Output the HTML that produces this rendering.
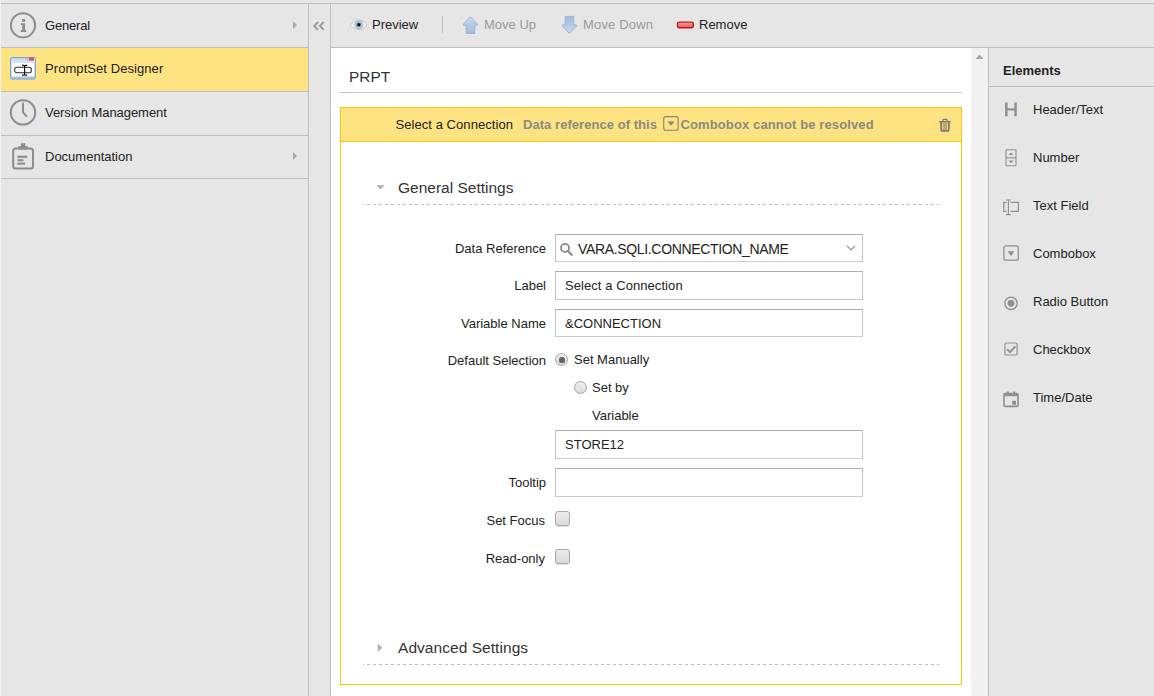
<!DOCTYPE html>
<html>
<head>
<meta charset="utf-8">
<style>
*{box-sizing:border-box;margin:0;padding:0}
html,body{width:1154px;height:696px;overflow:hidden;background:#e6e6e6}
body{font-family:"Liberation Sans",sans-serif;font-size:13px;color:#222;position:relative}
.abs{position:absolute}
.t{position:absolute;white-space:nowrap;line-height:16px;height:16px;margin-top:1px}
.r{text-align:right}
.line{position:absolute;background:#bfbfbf}
/* sidebar */
#side{position:absolute;left:1px;top:3px;width:307px;height:693px;border-top:1px solid #bfbfbf}
.nav{position:absolute;left:0;width:307px;height:44px;border-bottom:1px solid #bfbfbf}
.nav.sel{background:#fde382}
.nav .lbl{position:absolute;left:44px;top:14px;line-height:16px;white-space:nowrap}
/* inputs */
.inp{position:absolute;left:555px;width:308px;height:28px;background:#fff;border:1px solid #c2c2c2;border-top-color:#adadad;border-bottom-color:#cacaca}
.inp span{position:absolute;left:9px;top:6px;line-height:16px;white-space:nowrap}
.dash{position:absolute;left:363px;width:576px;height:1px;background:repeating-linear-gradient(90deg,#bdbdbd 0,#bdbdbd 3px,transparent 3px,transparent 6px);background-position:-2px 0}
.cb{position:absolute;left:555px;width:15px;height:15px;border:1px solid #a9a9a9;border-radius:3px;background:linear-gradient(#ececec,#dadada);box-shadow:0 1px 0 rgba(0,0,0,.12)}
.rad{position:absolute;width:13px;height:13px;border:1px solid #a6a6a6;border-radius:50%;background:linear-gradient(#f0f0f0,#d9d9d9)}
.el{position:absolute;left:1033px;white-space:nowrap;line-height:16px;margin-top:1px}
</style>
</head>
<body>
<!-- left white sliver -->
<div class="abs" style="left:0;top:0;width:1px;height:696px;background:#f4f4f4"></div>

<!-- sidebar -->
<div id="side">
  <div class="nav" style="top:0"><span class="lbl" style="letter-spacing:-0.2px">General</span></div>
  <div class="nav sel" style="top:44px"><span class="lbl" style="top:13px;letter-spacing:0.07px">PromptSet Designer</span></div>
  <div class="nav" style="top:88px"><span class="lbl" style="top:13px;letter-spacing:-0.06px">Version Management</span></div>
  <div class="nav" style="top:132px;height:43px"><span class="lbl" style="top:13px">Documentation</span></div>
</div>
<div class="line" style="left:308px;top:3px;width:1px;height:693px"></div>
<div class="line" style="left:330px;top:3px;width:1px;height:693px"></div>
<div class="line" style="left:308px;top:3px;width:846px;height:1px"></div>

<!-- toolbar -->
<div class="line" style="left:331px;top:47px;width:823px;height:1px"></div>
<div class="t" style="left:372px;top:16px">Preview</div>
<div class="line" style="left:442px;top:16px;width:1px;height:17px;background:#bdbdbd"></div>
<div class="t" style="left:484px;top:16px;color:#9a9a9a">Move Up</div>
<div class="t" style="left:583px;top:16px;color:#9a9a9a;letter-spacing:0.18px">Move Down</div>
<div class="t" style="left:699px;top:16px">Remove</div>

<!-- main white -->
<div class="abs" style="left:331px;top:48px;width:640px;height:648px;background:#fff"></div>
<div class="abs" style="left:971px;top:48px;width:17px;height:648px;background:#f1f1f1"></div>
<div class="line" style="left:988px;top:48px;width:1px;height:648px"></div>

<div class="t" style="left:349px;top:67px;font-size:15.4px;line-height:18px;height:18px;color:#333">PRPT</div>
<div class="line" style="left:340px;top:92px;width:622px;height:1px;background:#c6c6c6"></div>

<!-- yellow box -->
<div class="abs" style="left:340px;top:107px;width:622px;height:578px;border:1px solid #f8c906"></div>
<div class="abs" style="left:341px;top:108px;width:620px;height:34px;background:#fde382;border-bottom:1px solid #f8c906"></div>
<div class="t" style="left:395.5px;top:116px;letter-spacing:0.06px">Select a Connection</div>
<div class="t" style="left:523px;top:116px;font-weight:bold;color:#8b8b80;letter-spacing:0.05px">Data reference of this</div>
<div class="t" style="left:680.5px;top:116px;font-weight:bold;color:#8b8b80;letter-spacing:0.12px">Combobox cannot be resolved</div>

<!-- General settings -->
<div class="t" style="left:398px;top:178px;font-size:15.5px;line-height:18px;height:18px;color:#333">General Settings</div>
<div class="dash" style="top:204px"></div>

<div class="t r" style="left:396px;width:150px;top:240px">Data Reference</div>
<div class="inp" style="top:234px"><span style="left:22px;font-size:14px;letter-spacing:-0.34px">VARA.SQLI.CONNECTION_NAME</span></div>
<div class="t r" style="left:396px;width:150px;top:277px">Label</div>
<div class="inp" style="top:271px;height:29px"><span style="letter-spacing:0.07px">Select a Connection</span></div>
<div class="t r" style="left:396px;width:150px;top:315px">Variable Name</div>
<div class="inp" style="top:309px"><span>&amp;CONNECTION</span></div>
<div class="t r" style="left:396px;width:150px;top:352px">Default Selection</div>
<div class="rad" style="left:555px;top:353px"></div>
<div class="t" style="left:574px;top:351px">Set Manually</div>
<div class="rad" style="left:574px;top:381px"></div>
<div class="t" style="left:592px;top:379px">Set by</div>
<div class="t" style="left:592px;top:407px">Variable</div>
<div class="inp" style="top:430px;height:29px"><span>STORE12</span></div>
<div class="t r" style="left:396px;width:150px;top:474px">Tooltip</div>
<div class="inp" style="top:468px;height:29px"></div>
<div class="t r" style="left:396px;width:149px;top:512px">Set Focus</div>
<div class="cb" style="top:511px"></div>
<div class="t r" style="left:396px;width:149px;top:550px">Read-only</div>
<div class="cb" style="top:549px"></div>

<div class="t" style="left:398px;top:638px;font-size:15.5px;letter-spacing:0.05px;line-height:18px;height:18px;color:#333">Advanced Settings</div>
<div class="dash" style="top:664px"></div>

<!-- right panel -->
<div class="t" style="left:1003px;top:62px;font-weight:bold">Elements</div>
<div class="line" style="left:989px;top:86px;width:165px;height:1px"></div>
<div class="el" style="top:101px">Header/Text</div>
<div class="el" style="top:149px">Number</div>
<div class="el" style="top:197px">Text Field</div>
<div class="el" style="top:245px">Combobox</div>
<div class="el" style="top:293px">Radio Button</div>
<div class="el" style="top:341px">Checkbox</div>
<div class="el" style="top:389px">Time/Date</div>

<!-- sidebar icons -->
<svg class="abs" style="left:9px;top:11px" width="29" height="29" viewBox="9 11 29 29">
  <circle cx="23" cy="25.3" r="12.1" fill="none" stroke="#8c8c8c" stroke-width="2"/>
  <rect x="22.1" y="19" width="3" height="2.8" fill="#8c8c8c"/>
  <path d="M20.8 23.2h4.3v6.8h1v1.9h-5.3v-1.9h1.4v-4.9h-1.4z" fill="#8c8c8c"/>
</svg>
<svg class="abs" style="left:9px;top:98px" width="29" height="29" viewBox="9 98 29 29">
  <circle cx="23" cy="112.4" r="12.2" fill="none" stroke="#8c8c8c" stroke-width="2"/>
  <path d="M23 103.6V112.4L26.4 116" fill="none" stroke="#8c8c8c" stroke-width="2" stroke-linecap="round" stroke-linejoin="round"/>
</svg>
<svg class="abs" style="left:9px;top:141px" width="29" height="31" viewBox="9 141 29 31">
  <rect x="13.2" y="148.5" width="19.8" height="20" rx="2.6" fill="none" stroke="#8c8c8c" stroke-width="2"/>
  <path d="M18.3 149.6v-3.4h2.6v-3h4.4v3h2.6v3.4z" fill="#8c8c8c"/>
  <rect x="17.4" y="155.7" width="9.8" height="2.1" fill="#8c8c8c"/>
  <rect x="17.4" y="159.2" width="6" height="2.1" fill="#8c8c8c"/>
  <rect x="17.4" y="162.6" width="7.6" height="2.1" fill="#8c8c8c"/>
</svg>
<!-- promptset icon -->
<svg class="abs" style="left:10px;top:57px" width="26" height="23" viewBox="0 0 26 23">
  <defs><linearGradient id="wg" x1="0" y1="0" x2="0" y2="1"><stop offset="0" stop-color="#bcd3ee"/><stop offset="1" stop-color="#dfeaf7"/></linearGradient></defs>
  <rect x="0.5" y="0.5" width="25" height="21.6" rx="1.6" fill="#a9c6e8" stroke="#7fa6d4"/>
  <rect x="1" y="1" width="24" height="4.6" fill="url(#wg)"/>
  <rect x="1.6" y="5.8" width="22.8" height="13.6" fill="#fff"/>
  <rect x="19" y="0.6" width="5" height="3" fill="#e8494a"/>
  <rect x="15.6" y="0.8" width="2.6" height="2.6" fill="#9fb9db"/>
  <rect x="4.6" y="10.3" width="16.8" height="5.4" rx="2.2" fill="#fff" stroke="#555" stroke-width="1.3"/>
  <path d="M14.6 8.2v10M12 8.2c1.6 0 2.6 0.3 2.6 1 0-0.7 1-1 2.6-1M12 18.2c1.6 0 2.6-0.3 2.6-1 0 0.7 1 1 2.6 1" fill="none" stroke="#111" stroke-width="1.2"/>
</svg>
<!-- sidebar arrows -->
<svg class="abs" style="left:292px;top:20px" width="6" height="10" viewBox="0 0 6 10"><path d="M1 1l4 4-4 4z" fill="#a8a8a8"/></svg>
<svg class="abs" style="left:292px;top:151px" width="6" height="10" viewBox="0 0 6 10"><path d="M1 1l4 4-4 4z" fill="#a8a8a8"/></svg>
<!-- collapse -->
<svg class="abs" style="left:312px;top:20px" width="14" height="12" viewBox="312 20 14 12"><path d="M318 21.900L314.300 25.900 318 29.900M323.700 21.900L320 25.900l3.700 4" fill="none" stroke="#9c9c9c" stroke-width="2.100"/></svg>
<!-- eye -->
<svg class="abs" style="left:349px;top:19px" width="19" height="12" viewBox="349 19 19 12">
  <path d="M350.2 24.8C353 21.2 356 20 358.8 20s5.8 1.2 8.2 4.8C364.600 28.400 361.600 29.600 358.800 29.600S353 28.400 350.200 24.800z" fill="#f3f3f3" stroke="#b9b9b9" stroke-width="0.8"/>
  <circle cx="358.8" cy="24.8" r="4.5" fill="#a9bfda"/>
  <circle cx="358.8" cy="24.8" r="2" fill="#5a4a44"/>
  <circle cx="358.8" cy="24.8" r="1.300" fill="#0a0a0a"/>
</svg>
<!-- move up / down -->
<svg class="abs" style="left:461px;top:15px" width="19" height="20" viewBox="461 15 19 20">
  <defs><linearGradient id="ag" x1="0" y1="0" x2="0" y2="1"><stop offset="0" stop-color="#cddcef"/><stop offset="0.5" stop-color="#b4c9e3"/><stop offset="1" stop-color="#a2bbdb"/></linearGradient></defs>
  <path d="M470.400 16.800L477.400 24.100q0.500 1.200-0.900 1.300H474.800V33.500H466.200V25.400H464.300q-1.400-0.100-0.900-1.300z" fill="url(#ag)" stroke="#94b0d6" stroke-width="0.900" stroke-linejoin="round"/>
</svg>
<svg class="abs" style="left:560px;top:15px" width="19" height="20" viewBox="560 15 19 20">
  <defs><linearGradient id="ag2" x1="0" y1="0" x2="0" y2="1"><stop offset="0" stop-color="#a2bbdb"/><stop offset="0.5" stop-color="#b4c9e3"/><stop offset="1" stop-color="#d0dff0"/></linearGradient></defs>
  <path d="M569.400 33.400L562.400 26.000q-0.500-1.200 0.900-1.300H565.200V16.400H573.800V24.700H575.700q1.400 0.100 0.900 1.300z" fill="url(#ag2)" stroke="#94b0d6" stroke-width="0.900" stroke-linejoin="round"/>
</svg>
<!-- remove -->
<svg class="abs" style="left:676px;top:20px" width="19" height="10" viewBox="676 20 19 10">
  <defs><linearGradient id="rg" x1="0" y1="0" x2="0" y2="1"><stop offset="0" stop-color="#fbc4c4"/><stop offset="0.350" stop-color="#ef8585"/><stop offset="1" stop-color="#e65f5f"/></linearGradient></defs>
  <rect x="677.500" y="22.100" width="15.800" height="5.600" rx="1.600" fill="url(#rg)" stroke="#c21616" stroke-width="1.400"/>
</svg>
<!-- scroll arrow -->
<svg class="abs" style="left:975px;top:54px" width="9" height="6" viewBox="0 0 9 6"><path d="M0.500 5L4.500 0.800 8.500 5z" fill="#a3a3a3"/></svg>
<!-- trash -->
<svg class="abs" style="left:938px;top:118px" width="14" height="15" viewBox="938 118 14 15">
  <rect x="939.200" y="121" width="11.600" height="1.500" fill="#787878"/>
  <path d="M942.800 121.200v-1q0-0.900 0.900-0.900h2.600q0.900 0 0.900 0.900v1" fill="none" stroke="#787878" stroke-width="1.200"/>
  <path d="M940.900 122.400l0.500 8.600h7.200l0.500-8.600" fill="#b7a96c" stroke="#787878" stroke-width="1.700" stroke-linejoin="round"/>
  <rect x="942.200" y="123.400" width="0.900" height="6.400" fill="#f3dc80"/>
  <rect x="947" y="123.400" width="0.900" height="6.400" fill="#f3dc80"/>
</svg>
<!-- header combobox icon -->
<svg class="abs" style="left:663px;top:116px" width="16" height="15" viewBox="0 0 16 15">
  <rect x="0.700" y="0.600" width="14.400" height="13.600" rx="2" fill="none" stroke="#85857f" stroke-width="1.100"/>
  <path d="M4.600 5.600h6.800l-3.400 4.200z" fill="#85857f"/>
</svg>
<!-- section triangles -->
<svg class="abs" style="left:376px;top:185px" width="9" height="5" viewBox="0 0 9 5"><path d="M0.400 0.200h8.200l-4.100 4.400z" fill="#b0b0b0"/></svg>
<svg class="abs" style="left:377px;top:643px" width="6" height="10" viewBox="0 0 6 10"><path d="M0.800 0.500l4.400 4.200-4.400 4.200z" fill="#b0b0b0"/></svg>
<!-- search icon -->
<svg class="abs" style="left:559px;top:242px" width="15" height="15" viewBox="559 242 15 15">
  <circle cx="565" cy="247.900" r="4" fill="none" stroke="#8e8e8e" stroke-width="1.900"/>
  <path d="M568 251l3.600 3.700" stroke="#8e8e8e" stroke-width="2.300" stroke-linecap="round"/>
</svg>
<!-- chevron -->
<svg class="abs" style="left:846px;top:245px" width="10" height="6" viewBox="0 0 10 6"><path d="M1 0.800l4 4 4-4" fill="none" stroke="#8e8e8e" stroke-width="1.200"/></svg>
<!-- radio dot -->
<div class="abs" style="left:558.500px;top:356.500px;width:6px;height:6px;border-radius:2.600px;background:#666"></div>

<!-- element icons -->
<svg class="abs" style="left:1003px;top:100px" width="17" height="310" viewBox="1003 100 17 310" fill="none" stroke="#8f8f8f">
  <!-- H -->
  <path d="M1005.100 102.600h2.500v5.600h6.700v-5.600h2.500v13.600h-2.500v-5.700h-6.700v5.700h-2.500z" fill="#909090" stroke="none"/>
  <!-- number -->
  <rect x="1006" y="149.800" width="10" height="16" rx="0.800" stroke-width="1.100"/>
  <path d="M1006 157.800h10" stroke-width="1.100"/>
  <path d="M1008.600 155l2.400-2.600 2.400 2.600zM1008.600 160.600l2.400 2.600 2.400-2.600z" fill="#8f8f8f" stroke="none"/>
  <!-- text field -->
  <path d="M1006.400 202.300h-2.600v9h2.600M1010.400 202.300h8v9h-8" stroke-width="1.200"/>
  <path d="M1008.400 200v14.600M1006 200h4.800M1006 214.600h4.800" stroke-width="1.100"/>
  <!-- combobox -->
  <rect x="1003.900" y="245.800" width="14.400" height="14.400" rx="2" stroke-width="1.200"/>
  <path d="M1007.800 251.200h6.400l-3.200 5z" fill="#8f8f8f" stroke="none"/>
  <!-- radio -->
  <circle cx="1011" cy="303.300" r="6.200" stroke-width="1.300"/>
  <circle cx="1011" cy="303.300" r="3.400" fill="#8f8f8f" stroke="none"/>
  <!-- checkbox -->
  <rect x="1004.900" y="343" width="12.200" height="12" rx="1.600" stroke-width="1.200"/>
  <path d="M1007.200 349.400l2.800 2.800 5.400-5.800" stroke-width="1.900"/>
  <!-- calendar -->
  <rect x="1004" y="393.600" width="14" height="12.800" rx="1" stroke-width="1.600"/>
  <rect x="1004" y="393" width="14" height="3.200" fill="#8f8f8f" stroke="none"/>
  <rect x="1006.800" y="391.500" width="2" height="2.500" fill="#8f8f8f" stroke="none"/>
  <rect x="1013.100" y="391.500" width="2" height="2.500" fill="#8f8f8f" stroke="none"/>
  <rect x="1012.200" y="400.800" width="3.800" height="3.900" rx="0.500" fill="#8f8f8f" stroke="none"/>
</svg>
</body>
</html>
